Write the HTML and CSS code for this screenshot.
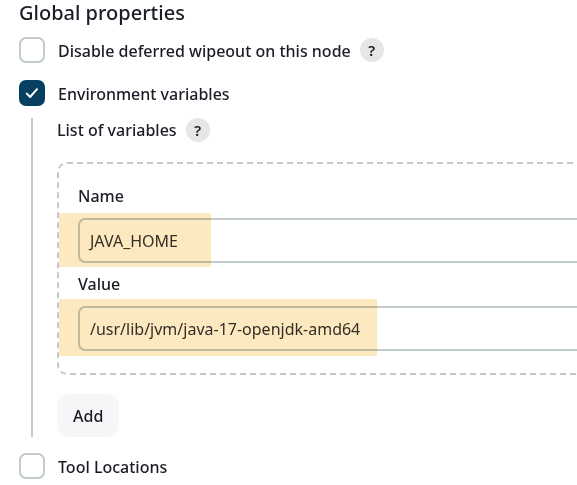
FILE: index.html
```html
<!DOCTYPE html>
<html lang="en">
<head>
<meta charset="utf-8">
<title>Global properties</title>
<link rel="stylesheet" href="styles.css">
</head>
<body>
<form class="properties">
  <h2 class="title">Global properties</h2>
  <div class="option">
    <input class="check" type="checkbox" id="wipeout">
    <label for="wipeout">Disable deferred wipeout on this node</label>
    <button class="help" type="button" aria-label="Help for wipeout">?</button>
  </div>
  <div class="option">
    <span class="checkbox">
      <input class="check" type="checkbox" id="environment" checked>
      <svg class="tick" viewBox="0 0 26 26" aria-hidden="true"><path d="M7.8 13.6 11.1 17 18 9.2"/></svg>
    </span>
    <label for="environment">Environment variables</label>
  </div>
  <section class="nested">
    <div class="list-heading">
      <span>List of variables</span>
      <button class="help" type="button" aria-label="Help for variables">?</button>
    </div>
    <div class="variable">
      <label for="name">Name</label>
      <div class="field">
        <input class="text" type="text" id="name" value="JAVA_HOME">
        <span class="mark mark-name"></span>
      </div>
      <label for="value">Value</label>
      <div class="field">
        <input class="text" type="text" id="value" value="/usr/lib/jvm/java-17-openjdk-amd64">
        <span class="mark mark-value"></span>
      </div>
    </div>
    <button class="add" type="button">Add</button>
  </section>
  <div class="option">
    <input class="check" type="checkbox" id="tools">
    <label for="tools">Tool Locations</label>
  </div>
</form>
</body>
</html>
```
FILE: styles.css
```css
* {
  box-sizing: border-box;
}

body {
  margin: 0;
  background: #fff;
  color: #1c1c27;
  font: 500 16px/24px "Noto Sans", "Open Sans", sans-serif;
  overflow: hidden;
}

input,
button {
  margin: 0;
  color: inherit;
  font: inherit;
}

.properties {
  padding-left: 19px;
}

.title {
  margin: 0 0 11px;
  font-size: 20px;
  font-weight: 500;
  line-height: 26px;
}

.option {
  display: flex;
  align-items: center;
  height: 26px;
  margin-bottom: 17px;
}

.option label {
  margin-left: 13px;
  padding-top: 2px;
}

.checkbox {
  position: relative;
  display: flex;
}

.check {
  appearance: none;
  width: 26px;
  height: 26px;
  border: 2px solid #c1cace;
  border-radius: 7px;
  background: #fff;
}

.check:checked {
  border-color: #073f61;
  background: #073f61;
}

.tick {
  position: absolute;
  inset: 0;
  fill: none;
  stroke: #fff;
  stroke-width: 2;
  stroke-linecap: round;
  stroke-linejoin: round;
  pointer-events: none;
}

.help {
  width: 24px;
  height: 24px;
  margin-left: 9px;
  padding: 0;
  border: 0;
  border-radius: 50%;
  background: #e6e6e6;
  font-size: 15px;
  font-weight: 600;
  line-height: 24px;
}

.nested {
  margin: -5px 0 16px 12px;
  padding-left: 24px;
  border-left: 2px solid #c1cace;
}

.list-heading {
  display: flex;
  margin-bottom: 20px;
}

.variable {
  margin: 0 -24px 19px 0;
  padding: 20px 0 13px 19px;
  border: 2px dashed #c1cace;
  border-radius: 10px;
}

.variable label {
  display: block;
  margin-bottom: 10px;
}

.field {
  position: relative;
  margin-bottom: 9px;
}

.text {
  display: block;
  width: 100%;
  height: 45px;
  padding: 0 8px;
  border: 2px solid #c1cace;
  border-right: 0;
  border-radius: 7px 0 0 7px;
  background: #fff;
  color: #333;
  font-weight: 400;
  text-indent: 2px;
}

.mark {
  position: absolute;
  left: -19px;
  background: #fde9c0;
  mix-blend-mode: multiply;
  pointer-events: none;
}

.mark-name {
  top: -5px;
  width: 152px;
  height: 54px;
}

.mark-value {
  top: -7px;
  width: 318px;
  height: 57px;
}

.add {
  display: block;
  height: 43px;
  padding: 0 16px;
  border: 0;
  border-radius: 12px;
  background: #f6f6f9;
}
```
